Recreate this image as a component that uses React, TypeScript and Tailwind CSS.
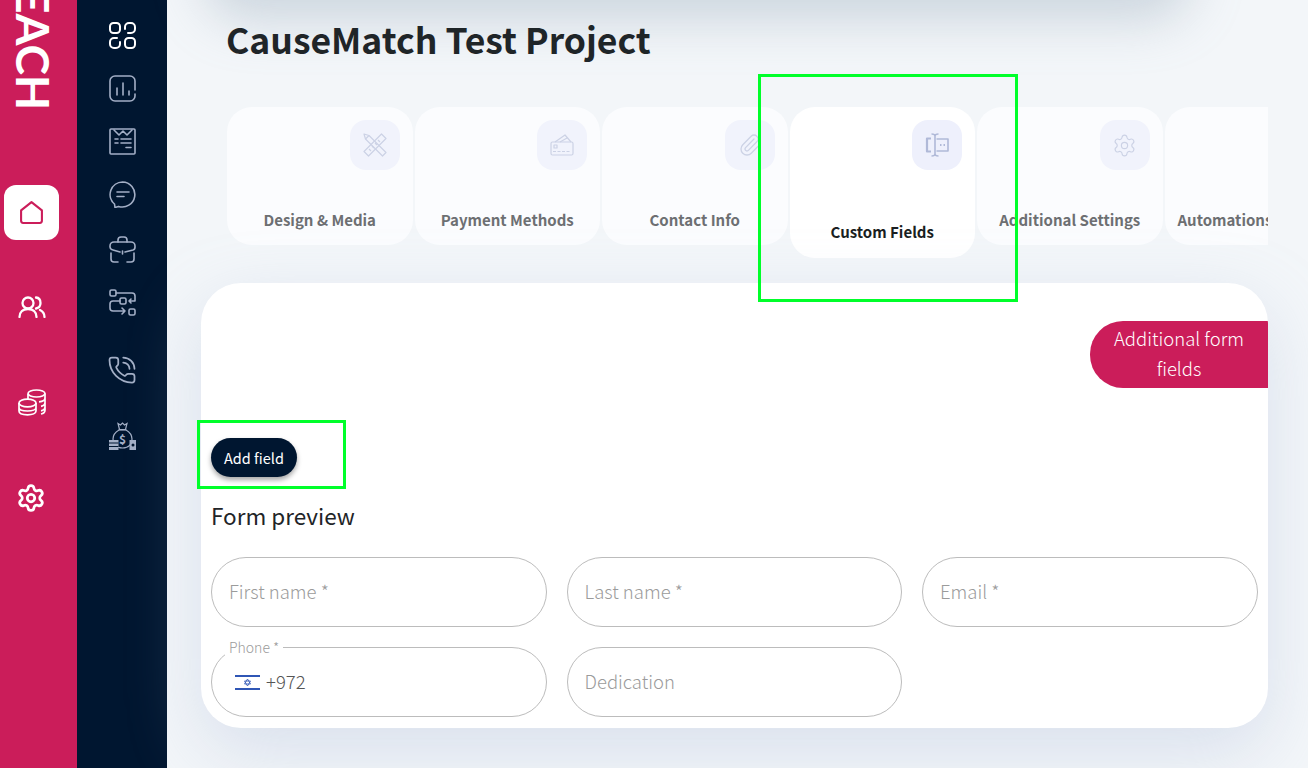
import { Paperclip, PhoneCall, Settings } from "lucide-react";
import type { ReactNode } from "react";

const font = "font-['Noto_Sans_CJK_SC','Noto_Sans',sans-serif]";

function Icon({ children, className }: { children: ReactNode; className?: string }) {
  return (
    <svg viewBox="0 0 27 27" fill="none" stroke="currentColor" strokeWidth="1.6" strokeLinecap="round" strokeLinejoin="round" className={className}>
      {children}
    </svg>
  );
}

const navIcons = [
  {
    h: "h-[27px] text-white mt-[22px]",
    el: (
      <g strokeWidth="2">
        <rect x="1" y="1" width="10" height="10" rx="3.500" />
        <rect x="16" y="16" width="10" height="10" rx="3.500" />
        <path d="M16 7V5a4 4 0 0 1 4-4h2a4 4 0 0 1 4 4v2a4 4 0 0 1-4 4h-3" />
        <path d="M11 20v2a4 4 0 0 1-4 4H5a4 4 0 0 1-4-4v-2a4 4 0 0 1 4-4h3" />
      </g>
    ),
  },
  {
    h: "h-[27px] mt-[26px]",
    el: (
      <>
        <path d="M26 19v2a5 5 0 0 1-5 5H6a5 5 0 0 1-5-5V6a5 5 0 0 1 5-5h15a5 5 0 0 1 5 5v9" />
        <path d="M8 20v-7M14 20V8M20 20v-4" />
      </>
    ),
  },
  {
    h: "h-[27px] mt-[26px]",
    el: (
      <>
        <rect x="1" y="1" width="25" height="25" rx="1" />
        <path d="M5 2l5 5 4-4 4 4 5-5" />
        <path d="M6 11h3M12 11h10M6 15h3M12 15h10M17 19.500h5" />
      </>
    ),
  },
  {
    h: "h-[27px] mt-[26px]",
    el: (
      <>
        <path d="M13.500 1a12.500 12.500 0 1 1-4 24.400L6 26.500l-.5-3.500A12.500 12.500 0 0 1 13.500 1z" />
        <path d="M8 11h12M8 15.500h7" />
      </>
    ),
  },
  {
    h: "h-[27px] mt-[28px]",
    el: (
      <>
        <path d="M9 6V4a3 3 0 0 1 3-3h3a3 3 0 0 1 3 3v2" />
        <path d="M5 6h17a4 4 0 0 1 4 4v1a3 3 0 0 1-2 3l-8 2M11 16l-7-2a3.500 3.500 0 0 1-3-3v-1a4 4 0 0 1 4-4" />
        <path d="M13.500 15v3" />
        <path d="M2 17v6a3 3 0 0 0 3 3h4M18 26h4a3 3 0 0 0 3-3v-6" />
      </>
    ),
  },
  {
    h: "h-[27px] mt-[26px]",
    el: (
      <>
        <rect x="1" y="1" width="6" height="6" rx="1.500" />
        <rect x="11" y="9" width="6" height="6" rx="1.500" />
        <rect x="20" y="20" width="6" height="6" rx="1.500" />
        <path d="M7 4h16a3 3 0 0 1 3 3v5h-6M22 10l-2 2 2 2" />
        <path d="M11 12H4a3 3 0 0 0-3 3v4a3 3 0 0 0 3 3h12M13 19l3 3-3 3" />
      </>
    ),
  },
];

const tabs = [
  { label: "Design & Media", icon: "design" },
  { label: "Payment Methods", icon: "card" },
  { label: "Contact Info", icon: "clip" },
  { label: "Custom Fields", icon: "field", active: true },
  { label: "Additional Settings", icon: "gear" },
  { label: "Automations", icon: "none" },
];

function TabIcon({ name }: { name: string }) {
  if (name === "clip") return <Paperclip className="h-[24px] w-[24px]" strokeWidth={1.3} />;
  if (name === "gear") return <Settings className="h-[25px] w-[25px]" strokeWidth={1.1} />;
  if (name === "design")
    return (
      <svg viewBox="0 0 24 24" fill="none" stroke="currentColor" strokeWidth="1.200" strokeLinejoin="round" className="h-[24px] w-[24px]">
        <path d="M1 1l5 1.500L23 19.500 19.500 23 2.500 6z" />
        <path d="M2.500 6L6 2.500" />
        <path d="M1 18.500L18.500 1 23 5.500 5.500 23z" />
        <path d="M6 16l2 2M9 13l2 2M12 10l2 2M15 7l2 2" />
      </svg>
    );
  if (name === "card")
    return (
      <svg viewBox="0 0 24 24" fill="none" stroke="currentColor" strokeWidth="1.200" strokeLinejoin="round" className="h-[24px] w-[24px]">
        <rect x="1" y="9" width="22" height="13" rx="1.500" />
        <path d="M5 9l10-7 6 7M10 9l7-4" />
        <rect x="4" y="12" width="3" height="3" />
        <path d="M3 18.500h18" strokeDasharray="3 1.500" />
      </svg>
    );
  if (name === "field")
    return (
      <svg viewBox="0 0 24 24" fill="none" stroke="currentColor" strokeWidth="1.600" strokeLinejoin="round" className="h-[24px] w-[24px]">
        <path d="M6 5.500H2v13h4" strokeWidth="2.200" />
        <path d="M11.500 6H23v12H11.500" />
        <path d="M6.500 1c2.500 0 3.500 1 3.500 2v18c0 1-1 2-3.500 2M13.500 1c-2.500 0-3.500 1-3.500 2v18c0 1 1 2 3.500 2" />
        <path d="M15 12h1.500M18.500 12H20" strokeWidth="1.800" />
      </svg>
    );
  return null;
}

export default function App() {
  return (
    <div className={`relative flex h-[768px] w-[1308px] overflow-hidden bg-[#f3f6f9] ${font}`}>
      <aside className="flex w-[77px] shrink-0 flex-col items-start bg-[#cb1d5a] text-white">
        <div className="flex h-[110px] items-end pl-[13px]">
          <span className="font-['Lato',sans-serif] text-[46px] font-bold leading-[40px] [writing-mode:vertical-rl]">EACH</span>
        </div>
        <div className="mt-[75px] ml-1 flex h-[55px] w-[55px] items-center justify-center rounded-[12px] bg-white text-[#cb1d5a]">
          <svg viewBox="0 0 24 24" fill="none" stroke="currentColor" strokeWidth="2" strokeLinejoin="round" className="h-[25px] w-[25px]">
            <path d="M2 10L12 2l10 8v10a2 2 0 0 1-2 2H4a2 2 0 0 1-2-2z" />
          </svg>
        </div>
        <svg viewBox="0 0 28 22" fill="none" stroke="currentColor" strokeWidth="2.300" strokeLinecap="round" className="mt-[56px] ml-[18px] h-[22px] w-[28px]">
          <circle cx="10" cy="7" r="5.500" />
          <path d="M1.500 21c0-5 3.500-8 8.500-8s8.500 3 8.500 8" />
          <path d="M18 1.500c3 .3 4.500 2.500 4.500 5.500S20.500 12 18 12.500" />
          <path d="M22 14c3 1.500 4.500 4 4.500 7" />
        </svg>
        <svg viewBox="0 0 28 27" fill="none" stroke="currentColor" strokeWidth="1.700" className="mt-[71px] ml-[18px] h-[27px] w-[28px]">
          <ellipse cx="18.500" cy="4.500" rx="8.500" ry="3.500" />
          <path d="M10 5v5M27 4.500V21c0 2-1.500 3.500-4 4M27 9c0 2-2 3.500-6 3.800M27 13.500c0 2-1.500 3.300-4 3.800M27 18c0 2-1.500 3.300-4 3.800" />
          <ellipse cx="9.500" cy="14" rx="8.500" ry="3.800" />
          <path d="M1 14v8c0 2.200 3.500 3.800 8.500 3.800s8.500-1.600 8.500-3.800v-8M1 18.500c0 2.200 3.500 3.500 8.500 3.500s8.500-1.300 8.500-3.500" />
        </svg>
        <Settings className="mt-[67px] ml-[16px] h-[30px] w-[30px]" strokeWidth={2.200} />
      </aside>

      <nav className="flex w-[90px] shrink-0 flex-col items-center bg-[#001630] text-[#a3afc6]">
        {navIcons.map((n, i) => (
          <Icon key={i} className={n.h}>
            {n.el}
          </Icon>
        ))}
        <PhoneCall className="mt-[39px] h-[30px] w-[30px]" strokeWidth={1.400} />
        <svg viewBox="0 0 27 28" fill="none" stroke="currentColor" strokeWidth="1.200" className="mt-[37px] h-[28px] w-[27px]">
          <path d="M10.500 7.500L9 1.500l2.500 1.500L13.500 1 15.500 3 18 1.500l-1.500 6z" />
          <path d="M10 8c-3.500 2-6 5-6 9 0 5 3 9 9.500 9S23 22 23 17c0-4-2.500-7-6-9" />
          <path d="M9.500 8h8" />
          <rect x="0" y="18" width="9.500" height="10" fill="currentColor" stroke="none" />
          <path d="M0 21h9.500M0 24.500h9.500" stroke="#001630" />
          <rect x="20.500" y="18" width="6.500" height="10" fill="currentColor" stroke="none" />
          <circle cx="24" cy="23" r="1.500" fill="#001630" stroke="none" />
          <text x="13.500" y="22" textAnchor="middle" fontSize="12" fontWeight="700" fill="currentColor" stroke="none">$</text>
        </svg>
      </nav>

      <main className="relative min-w-0 flex-1 pl-[34px] pr-[40px]">
        <div className="absolute -top-[70px] left-[50px] right-[130px] h-[70px] rounded-[30px] shadow-[0_6px_50px_14px_rgba(150,170,185,0.42)]" />
        <h1 className="relative ml-[25px] mt-[16px] h-[46px] text-[35.500px] font-bold leading-[46px] text-[#1f2528]">CauseMatch Test Project</h1>
        <div className="relative ml-[26px] mt-[45px] flex h-[151px] items-start gap-[2px] overflow-hidden">
          {tabs.map((t) => (
            <div
              key={t.label}
              className={`flex w-[185.500px] shrink-0 flex-col items-center rounded-[25px] px-[13px] pt-[13px] ${t.active ? "h-[151px] bg-white text-[#b0b9d8]" : "h-[138px] bg-[#fbfcfe] text-[#ccd2e5]"}`}
            >
              <div className={`flex h-[50px] w-[50px] items-center justify-center self-end rounded-[16px] ${t.active ? "bg-[#eef0fc]" : "bg-[#f1f3fc]"} ${t.icon === "none" ? "invisible" : ""}`}>
                <TabIcon name={t.icon} />
              </div>
              <span className={`whitespace-nowrap text-[15px] font-bold leading-[20px] ${t.active ? "mt-[52px] text-[#1b1f22]" : "mt-[40px] text-[#6d6f72]"} ${t.icon === "none" ? "self-start" : ""}`}>{t.label}</span>
            </div>
          ))}
        </div>
        <section className="relative mt-[25px] h-[445px] w-[1067px] overflow-hidden rounded-[40px] bg-white pl-[10px] pr-[10.500px] pt-[38px] shadow-[0_24px_70px_rgba(170,182,215,0.35)]">
          <div className="-mr-[10.500px] flex justify-end">
            <button className="h-[67px] w-[178px] rounded-l-[33px] bg-[#cb1d5a] px-[18px] pb-[3px] text-[18.500px] font-light leading-[30px] text-white">Additional form fields</button>
          </div>
          <button className="mt-[50px] block h-[39px] w-[86px] rounded-full bg-[#001630] pt-px text-[14.500px] text-white shadow-[0_3px_5px_rgba(0,0,0,0.35)]">Add field</button>
          <h2 className="mt-[22px] text-[22.500px] font-normal leading-[32px] text-[#1f2528]">Form preview</h2>
          <div className="mt-[26px] grid grid-cols-3 gap-x-[20px] gap-y-[20px]">
            {["First name *", "Last name *", "Email *"].map((p) => (
              <div key={p} className="flex h-[70px] items-center rounded-[35px] border border-[#bcbcbc] pl-[17px] text-[18.500px] font-light text-[#9b9b9b]">
                {p}
              </div>
            ))}
            <div className="relative flex h-[70px] items-center rounded-[35px] border border-[#bcbcbc] pl-[23px] text-[18.500px] font-light text-[#555]">
              <span className="absolute -top-[9px] left-[13px] bg-white px-[4px] text-[14px] font-light leading-[16px] text-[#9b9b9b]">Phone *</span>
              <svg viewBox="0 0 25 15" className="mr-[6px] h-[15px] w-[25px]">
                <rect width="25" height="15" fill="#fff" />
                <rect width="25" height="2" fill="#2f56b5" />
                <rect y="13" width="25" height="2" fill="#2f56b5" />
                <path d="M12.500 4l3 5h-6zM12.500 11l-3-5h6z" fill="none" stroke="#2f56b5" strokeWidth="0.800" />
              </svg>
              +972
            </div>
            <div className="flex h-[70px] items-center rounded-[35px] border border-[#bcbcbc] pl-[17px] text-[18.500px] font-light text-[#9b9b9b]">Dedication</div>
          </div>
        </section>
      </main>

      <div className="absolute left-[758px] top-[74px] h-[228px] w-[260px] border-[3px] border-[#00ff2a]" />
      <div className="absolute left-[197px] top-[420px] h-[69px] w-[149px] border-[3px] border-[#00ff2a]" />
    </div>
  );
}
